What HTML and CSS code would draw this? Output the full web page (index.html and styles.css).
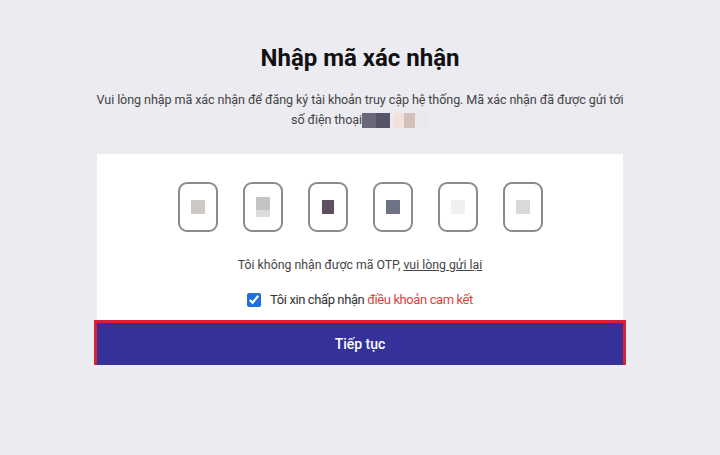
FILE: index.html
```html
<!DOCTYPE html>
<html lang="vi">
<head>
    <meta charset="UTF-8">
    <meta name="viewport" content="width=device-width, initial-scale=1.0">
    <title>Nhập mã xác nhận</title>
    <link rel="stylesheet" href="styles.css">
</head>
<body>
    <div class="page">
        <h1 class="title">Nhập mã xác nhận</h1>
        <p class="desc">Vui lòng nhập mã xác nhận để đăng ký tài khoản truy cập hệ thống. Mã xác nhận đã được gửi tới<br>
            số điện thoại<span class="phone"><span class="blk b1"></span><span class="blk b2"></span><span class="blk b3"></span><span class="blk b4"></span><span class="blk b5"></span></span></p>

        <div class="card">
            <div class="otp">
                <div class="cell"><span class="digit d1"></span></div>
                <div class="cell"><span class="digit d2"></span></div>
                <div class="cell"><span class="digit d3"></span></div>
                <div class="cell"><span class="digit d4"></span></div>
                <div class="cell"><span class="digit d5"></span></div>
                <div class="cell"><span class="digit d6"></span></div>
            </div>
            <p class="resend">Tôi không nhận được mã OTP, <a href="#" class="link">vui lòng gửi lại</a></p>
            <label class="agree">
                <input type="checkbox" class="check" checked>
                <span>Tôi xin chấp nhận <a href="#" class="terms">điều khoản cam kết</a></span>
            </label>
            <button class="btn">Tiếp tục</button>
        </div>
    </div>
</body>
</html>
```

FILE: styles.css
```css
body{
    margin: 0;
    background-color: #ecebf1;
    font-family: Roboto, "Liberation Sans", Arial, sans-serif;
    color: #222;
}
.page{
    width: 526px;
    margin: 0 auto;
    padding-top: 44px;
    text-align: center;
}
.title{
    margin: 0;
    font-size: 24px;
    line-height: 28px;
    font-weight: 700;
    color: #111;
}
.desc{
    margin: 18px -10px 0;
    font-size: 12.6px;
    letter-spacing: -0.1px;
    line-height: 20px;
    color: #444;
}
.phone{
    display: inline-flex;
    vertical-align: -4px;
    height: 15px;
}
.blk{
    display: block;
    height: 15px;
}
.b1{ width: 14px; background: #686878; }
.b2{ width: 14px; background: #555468; }
.b3{ width: 11px; background: #f3e2dc; margin-left: 3px; }
.b4{ width: 11px; background: #d2c2bb; }
.b5{ width: 14px; background: #ebe8ef; }
.card{
    margin-top: 24px;
    background: #fff;
    padding-top: 28px;
}
.otp{
    display: flex;
    justify-content: center;
    gap: 25px;
}
.cell{
    width: 40px;
    height: 50px;
    box-sizing: border-box;
    border: 2px solid #8a8a90;
    border-radius: 9px;
    display: flex;
    align-items: center;
    justify-content: center;
}
.digit{
    display: block;
    width: 14px;
    height: 14px;
}
.d1{ background: #cdc8c4; }
.d2{ height: 20px; background: linear-gradient(#c4c4c2 65%, #dcdcdc 65%); }
.d3{ width: 12px; background: #5f5060; }
.d4{ background: #6e7386; }
.d5{ background: #f0f0ee; }
.d6{ background: #d9d9d9; }
.resend{
    margin: 23px 0 0;
    font-size: 12.3px;
    line-height: 20px;
    color: #444;
}
.link{
    color: #444;
    text-decoration: underline;
}
.agree{
    margin-top: 15px;
    display: flex;
    justify-content: center;
    align-items: center;
    gap: 9px;
    font-size: 13px;
    letter-spacing: -0.4px;
    line-height: 20px;
    color: #333;
}
.check{
    margin: 0;
    width: 14px;
    height: 14px;
    accent-color: #1f6fdc;
}
.terms{
    color: #d9433b;
    text-decoration: none;
}
.btn{
    display: block;
    margin-top: 13px;
    width: 100%;
    height: 42px;
    border: none;
    outline: 3px solid #d6232f;
    background-color: #34319a;
    color: #fff;
    font-family: inherit;
    font-size: 14px;
    font-weight: 500;
}
```
